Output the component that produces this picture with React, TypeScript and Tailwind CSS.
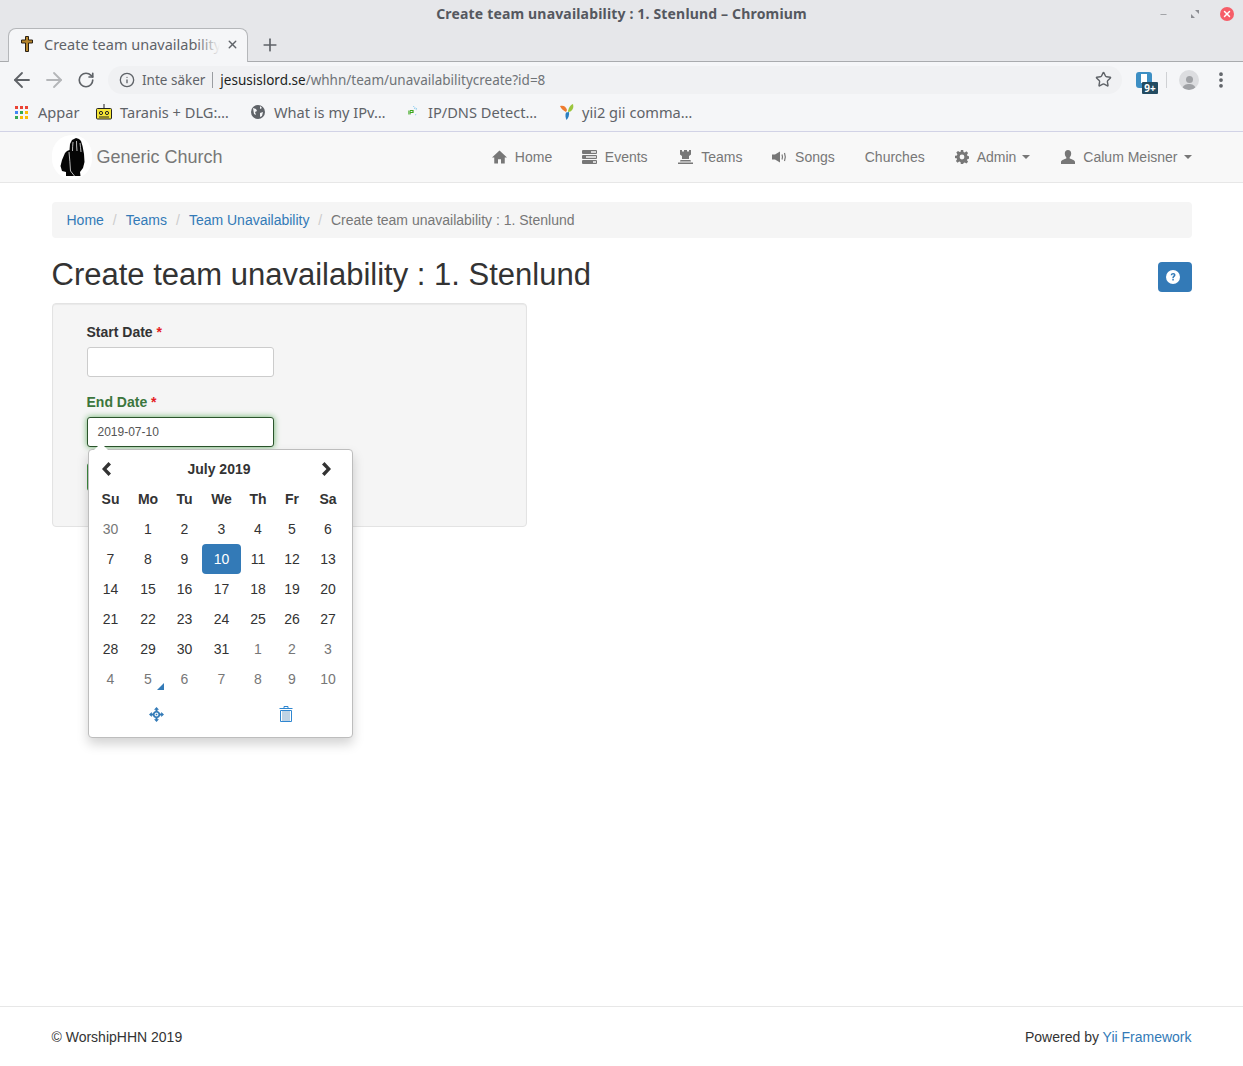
import { Star, MoreVertical, RotateCw, ArrowLeft, ArrowRight, Info, Plus, X, Minus } from "lucide-react";

const sans = "font-['Liberation_Sans',Arial,sans-serif]";
const ui = "font-['Noto_Sans',sans-serif]";

const Caret = () => (
  <span className="ml-[6px] inline-block h-0 w-0 border-x-[4px] border-t-[4px] border-x-transparent border-t-[#777]" />
);

const HomeIcon = () => (
  <svg width="16" height="14" viewBox="0 0 16 14" fill="#777">
    <path d="M8 0 L16 7.6 H13.6 V14 H9.6 V9.5 H6.4 V14 H2.4 V7.6 H0 Z" />
  </svg>
);
const TasksIcon = () => (
  <svg width="15" height="14" viewBox="0 0 15 14" fill="#777">
    <path fillRule="evenodd" d="M0 1a1 1 0 011-1h13a1 1 0 011 1v2a1 1 0 01-1 1H1a1 1 0 01-1-1zM9 1.200v1.600h5V1.200zM0 6a1 1 0 011-1h13a1 1 0 011 1v2a1 1 0 01-1 1H1a1 1 0 01-1-1zM4 6.200v1.600h10V6.200zM0 11a1 1 0 011-1h13a1 1 0 011 1v2a1 1 0 01-1 1H1a1 1 0 01-1-1zM11 11.200v1.600h3v-1.600z" />
  </svg>
);
const TowerIcon = () => (
  <svg width="15" height="14" viewBox="0 0 15 14" fill="#777">
    <path d="M2 0h2v1.500h2V0h3v1.500h2V0h2v4.500L11 6v3H4V6L2 4.500zM2.500 10h10L13 11.500H2zM0 12.500h15V14H0z" />
  </svg>
);
const VolumeIcon = () => (
  <svg width="15" height="12" viewBox="0 0 15 12" fill="none">
    <path d="M0 3.500h3L8 .5v11l-5-3H0z" fill="#777" />
    <path d="M10 3.500q1 2.500 0 5M12.500 2q1.600 4 0 8" stroke="#777" strokeWidth="1.200" />
  </svg>
);
const CogIcon = () => (
  <svg width="14" height="14" viewBox="0 0 14 14" fill="#777">
    <path fillRule="evenodd" d="M5.800 0h2.400l.3 1.900 1.300.5L11.400 1.300l1.700 1.700-1.100 1.600.5 1.300 1.900.3v2.400l-1.900.3-.5 1.300 1.100 1.600-1.700 1.700-1.600-1.100-1.300.5L8.200 14H5.800l-.3-1.900-1.300-.5-1.600 1.100L.9 11l1.100-1.600-.5-1.300L0 8.200V5.800l1.900-.3.5-1.300L1.300 2.600 3 .9l1.600 1.100 1.300-.5zM7 4.600a2.400 2.400 0 100 4.800 2.400 2.400 0 000-4.800z" />
  </svg>
);
const UserIcon = () => (
  <svg width="14" height="14" viewBox="0 0 14 14" fill="#777">
    <path d="M7 0c2 0 3.200 1.500 3.200 3.500 0 1.500-.6 3-1.500 3.800v1.200c1.800.7 5.300 1.500 5.300 3.500v2H0v-2c0-2 3.500-2.800 5.300-3.500V7.300C4.400 6.500 3.800 5 3.800 3.500 3.800 1.500 5 0 7 0z" />
  </svg>
);

const HandLogo = () => (
  <div className="flex h-[44px] w-[40px] items-center justify-center rounded-full bg-white">
    <svg width="26" height="39" viewBox="0 0 26 39" className="mt-[1px]">
      <path d="M17 0l3 1 2 2 1.500 5L25 16l.5 8L24 30l-3 4 .5 4H7v-4l-4-1-1.500-5L3 22l3-7 2-2 2.500-1L11 6l2-4z" fill="#050505" />
      <path d="M14 4q-.5 5-.5 9M17.500 3q0 5 .5 10M21 5q.5 4 1 9M10 14q1 10 1.500 19l4 5" stroke="#e8e8e8" strokeWidth=".8" fill="none" />
    </svg>
  </div>
);

const CrossFavicon = () => (
  <svg width="12" height="16" viewBox="0 0 12 16">
    <path d="M4.500.5h3v3.500h4v3h-4v8.500h-3V7h-4V4h4z" fill="#b8862b" stroke="#2a2115" strokeWidth="1" />
  </svg>
);
const AppsIcon = () => (
  <div className="grid grid-cols-3 gap-[2px]">
    {["#ea4335", "#ea4335", "#ea4335", "#4285f4", "#34a853", "#fbbc05", "#34a853", "#fbbc05", "#fbbc05"].map((c, i) => (
      <span key={i} className="h-[3px] w-[3px]" style={{ background: c }} />
    ))}
  </div>
);
const TaranisIcon = () => (
  <svg width="16" height="16" viewBox="0 0 16 16">
    <path d="M8 0v4" stroke="#222" strokeWidth="1" />
    <rect x=".5" y="4.500" width="15" height="10.500" rx="1" fill="#f5e637" stroke="#222" />
    <circle cx="5" cy="9" r="1.600" fill="none" stroke="#222" />
    <circle cx="11" cy="9" r="1.600" fill="none" stroke="#222" />
    <path d="M3 13h10" stroke="#222" />
  </svg>
);
const GlobeIcon = () => (
  <svg width="14" height="14" viewBox="0 0 14 14">
    <circle cx="7" cy="7" r="7" fill="#5f6368" />
    <path d="M2 3l3 1 1 2-2 1 1 3-2-1zM9 1l2 2-2 1zM9 8l3-1-1 4-2 1z" fill="#f5f6f8" />
  </svg>
);
const IpIcon = () => (
  <svg width="10" height="12" viewBox="0 0 10 12">
    <path d="M5 0l4 3M6 2l3 2M7 9l2-1" stroke="#7cc6ee" strokeWidth="1" strokeDasharray="1 1" />
    <path d="M0 4.500v4M2 4.500v4M2 4.500h3v2H2" stroke="#3aa71b" strokeWidth="1.200" fill="none" />
  </svg>
);
const YiiIcon = () => (
  <svg width="14" height="16" viewBox="0 0 14 16">
    <path d="M0 2c3-1 6 0 7 4l-1 2C4 7 1 5 0 2z" fill="#ee7b2f" />
    <path d="M13 0c1 3 0 6-2.500 7.500L8 8c0-3 2-7 5-8z" fill="#9bc53d" />
    <path d="M6 8.500l3-.5c.5 3-.5 6-2.500 8-1-2-1.500-5-.5-7.500z" fill="#2a7fc1" />
  </svg>
);

const Bookmark = ({ icon, label, width, slot }: { icon: React.ReactNode; label: string; width: string; slot: string }) => (
  <div className={`flex items-center ${width}`}>
    <span className={`flex shrink-0 items-center justify-start ${slot}`}>{icon}</span>
    <span className="whitespace-nowrap">{label}</span>
  </div>
);

const ChevronIcon = ({ left }: { left?: boolean }) => (
  <svg width="12" height="14" viewBox="0 0 12 14" fill="#333">
    {left ? <path d="M7.500 0L10 2.500 5.500 7 10 11.500 7.500 14 1 7z" /> : <path d="M4.500 0L2 2.500 6.500 7 2 11.500 4.500 14 11 7z" />}
  </svg>
);

const weeks = [
  [30, 1, 2, 3, 4, 5, 6],
  [7, 8, 9, 10, 11, 12, 13],
  [14, 15, 16, 17, 18, 19, 20],
  [21, 22, 23, 24, 25, 26, 27],
  [28, 29, 30, 31, 1, 2, 3],
  [4, 5, 6, 7, 8, 9, 10],
];

const Calendar = () => (
  <div className="absolute left-[1px] top-[57px] z-10 w-[265px] rounded-[4px] border border-[#bdbdbd] bg-white pb-[7px] pl-[3.500px] pr-[4.500px] pt-[4px] shadow-[0_6px_12px_rgba(0,0,0,0.175)]">
    <span className="absolute left-[5px] top-[-7px] h-0 w-0 border-x-[7px] border-b-[7px] border-x-transparent border-b-white" />
    <div className="grid grid-cols-[37px_38px_35px_39px_34px_34px_38px] text-center text-[14px] leading-[20px] text-[#333]">
      <div className="flex h-[30px] items-center justify-center pr-[8px]">
        <ChevronIcon left />
      </div>
      <div className="col-span-5 flex h-[30px] items-center justify-center font-bold">July 2019</div>
      <div className="flex h-[30px] items-center justify-center pr-[5px]">
        <ChevronIcon />
      </div>
      {["Su", "Mo", "Tu", "We", "Th", "Fr", "Sa"].map((d) => (
        <div key={d} className="flex h-[30px] items-center justify-center font-bold">
          {d}
        </div>
      ))}
      {weeks.map((week, w) =>
        week.map((d, i) => {
          const old = (w === 0 && d === 30) || (w === 4 && d < 10) || w === 5;
          const active = w === 1 && d === 10;
          return (
            <div
              key={`${w}-${i}`}
              className={`relative flex h-[30px] items-center justify-center ${
                active ? "rounded-[4px] bg-[#337ab7] text-white" : old ? "text-[#777]" : ""
              }`}
            >
              {d}
              {w === 5 && d === 5 && i === 1 && (
                <span className="absolute bottom-[4px] right-[3px] h-0 w-0 border-b-[7px] border-l-[7px] border-b-[#337ab7] border-l-transparent" />
              )}
            </div>
          );
        }),
      )}
    </div>
    <div className="mt-[4px] grid h-[32px] grid-cols-2 items-center">
      <div className="flex justify-center pl-[2px]">
        <svg width="15" height="15" viewBox="0 0 15 15" fill="#337ab7">
          <path d="M7.500 0l2.500 2.800H5zM7.500 15l2.500-2.800H5zM0 7.500l2.800-2.500v5zM15 7.500l-2.800-2.500v5z" />
          <path d="M7.500 2v11M2 7.500h11" stroke="#337ab7" strokeWidth="2" />
          <circle cx="7.500" cy="7.500" r="2.800" fill="#e6f0f8" stroke="#337ab7" strokeWidth="1.600" />
          <circle cx="7.500" cy="7.500" r=".8" />
        </svg>
      </div>
      <div className="flex justify-center pl-[5px]">
        <svg width="14" height="16" viewBox="0 0 14 16" fill="none" stroke="#2f86d0" strokeWidth="1">
          <path d="M.5 2.500h13M5 2.500V.5h4v2M1.500 4.500h11v11h-11z" />
          <path d="M4 5v10M6 5v10M8 5v10M10 5v10" stroke="#7fa6c9" />
        </svg>
      </div>
    </div>
  </div>
);

const NavItem = ({ icon, label, caret, slot = "mr-[7px]" }: { icon?: React.ReactNode; label: string; caret?: boolean; slot?: string }) => (
  <div className="flex items-center">
    {icon && <span className={`flex w-[15px] items-center justify-center ${slot}`}>{icon}</span>}
    <span>{label}</span>
    {caret && <Caret />}
  </div>
);

export default function App() {
  return (
    <div className={`flex min-h-[1066px] flex-col bg-white ${sans} text-[14px] leading-[20px] text-[#333]`}>
      {/* browser chrome */}
      <div className={`bg-[#e6e7ea] ${ui}`}>
        <div className="relative flex h-[28px] items-center justify-center text-[14px] font-bold tracking-[0.17px] text-[#55585f]">
          Create team unavailability : 1. Stenlund – Chromium
          <div className="absolute right-[9px] top-[7px] flex items-center">
            <Minus size={9} strokeWidth={2} className="mr-[23px] text-[#8b8d92]" />
            <svg width="8" height="8" viewBox="0 0 8 8" className="mr-[21px]" fill="#8b8d92">
              <path d="M4 0h4v4zM0 4l4 4H0z" />
            </svg>
            <span className="flex h-[14px] w-[14px] items-center justify-center rounded-full bg-[#f65d68] text-white">
              <X size={10} strokeWidth={3.5} />
            </span>
          </div>
        </div>
        <div className="flex h-[34px] items-start border-b border-[#a9abae] pl-[8px]">
          <div className="flex h-[34px] w-[240px] items-center rounded-t-[8px] border border-b-0 border-[#b5b7ba] bg-[#f5f6f8] pb-[3px] pl-[12px] pr-[6px]">
            <CrossFavicon />
            <span className="relative ml-[11px] w-[176px] overflow-hidden whitespace-nowrap text-[14.500px] text-[#5f6368]">
              Create team unavailability
              <span className="absolute right-0 top-0 h-full w-[24px] bg-gradient-to-r from-transparent to-[#f5f6f8]" />
            </span>
            <X size={13} strokeWidth={2.5} className="ml-[6px] text-[#5f6368]" />
          </div>
          <Plus size={20} strokeWidth={2} className="ml-[12px] mt-[7px] text-[#5f6368]" />
        </div>
      </div>
      <div className={`${ui} bg-[#f5f6f8]`}>
        <div className="flex h-[33px] items-center pl-[10px] pt-[2px]">
          <ArrowLeft size={24} strokeWidth={1.800} className="text-[#5f6368]" />
          <ArrowRight size={24} strokeWidth={1.800} className="ml-[8px] text-[#b4b6b9]" />
          <RotateCw size={18} strokeWidth={2.200} className="ml-[11px] text-[#5f6368]" />
          <div className="ml-[13px] flex h-[28px] w-[1014px] items-center rounded-full bg-[#f0f1f3] pl-[11px] pr-[10px] text-[13.500px]">
            <Info size={16} strokeWidth={2} className="text-[#5f6368]" />
            <span className="ml-[7px] text-[#5f6368]">Inte säker</span>
            <span className="mx-[7px] h-[16px] w-px bg-[#9a9da1]" />
            <span className="text-[#1c1e21]">jesusislord.se</span>
            <span className="text-[#6f7377]">/whhn/team/unavailabilitycreate?id=8</span>
            <Star size={17} strokeWidth={2} className="ml-auto text-[#5f6368]" />
          </div>
          <div className="relative ml-[14px] h-[16px] w-[16px] rounded-[3px] bg-[#3d8fc4]">
            <span className="absolute left-[5px] top-[2px] h-[9px] w-[6px] bg-white" />
            <span className="absolute left-[6px] top-[10px] h-[12px] w-[16px] rounded-[1px] bg-[#234b61] text-center text-[10px] font-bold leading-[12px] text-white">
              9+
            </span>
          </div>
          <span className="ml-[14px] h-[16px] w-px bg-[#cfd1d4]" />
          <div className="ml-[12px] flex h-[20px] w-[20px] flex-col items-center justify-end overflow-hidden rounded-full bg-[#dcdde0]">
            <span className="mb-[1px] h-[7px] w-[7px] rounded-full bg-[#a0a2a6]" />
            <span className="h-[6px] w-[14px] rounded-t-full bg-[#a0a2a6]" />
          </div>
          <MoreVertical size={20} strokeWidth={2.500} className="ml-[12px] text-[#5f6368]" />
        </div>
        <div className="flex h-[37px] items-center border-b border-[#d2d3e6] pb-[2px] pl-[15px] text-[14.600px] text-[#5f6368]">
          <Bookmark icon={<AppsIcon />} label="Appar" width="w-[81px]" slot="w-[23px]" />
          <Bookmark icon={<TaranisIcon />} label="Taranis + DLG:…" width="w-[155px]" slot="w-[24px]" />
          <Bookmark icon={<GlobeIcon />} label="What is my IPv…" width="w-[157px]" slot="w-[23px]" />
          <Bookmark icon={<IpIcon />} label="IP/DNS Detect…" width="w-[152px]" slot="w-[20px]" />
          <Bookmark icon={<YiiIcon />} label="yii2 gii comma…" width="w-[140px]" slot="w-[22px]" />
        </div>
      </div>

      {/* navbar */}
      <nav className="flex h-[51px] items-center justify-between border-b border-[#e7e7e7] bg-[#f8f8f8] px-[51.500px] text-[#777]">
        <div className="flex items-center">
          <HandLogo />
          <span className="ml-[5px] text-[18px]">Generic Church</span>
        </div>
        <div className="flex items-center gap-[30px]">
          <NavItem icon={<HomeIcon />} label="Home" slot="mr-[7.600px]" />
          <NavItem icon={<TasksIcon />} label="Events" slot="mr-[7.600px]" />
          <NavItem icon={<TowerIcon />} label="Teams" slot="mr-[8.600px]" />
          <NavItem icon={<VolumeIcon />} label="Songs" slot="mr-[7.600px]" />
          <NavItem label="Churches" />
          <NavItem icon={<CogIcon />} label="Admin" caret />
          <NavItem icon={<UserIcon />} label="Calum Meisner" caret slot="mr-[8px]" />
        </div>
      </nav>

      {/* page */}
      <main className="flex-1 px-[51.500px] pt-[19px]">
        <div className="flex h-[36px] items-center rounded-[4px] bg-[#f5f5f5] px-[15px]">
          <a className="text-[#337ab7]">Home</a>
          <span className="px-[9px] text-[#ccc]">/</span>
          <a className="text-[#337ab7]">Teams</a>
          <span className="px-[9px] text-[#ccc]">/</span>
          <a className="text-[#337ab7]">Team Unavailability</a>
          <span className="px-[8.800px] text-[#ccc]">/</span>
          <span className="text-[#777]">Create team unavailability : 1. Stenlund</span>
        </div>
        <div className="mt-[24px] flex h-[30px] items-start justify-between">
          <h1 className="text-[31px] leading-[26px] text-[#333]">Create team unavailability : 1. Stenlund</h1>
          <button className="flex h-[30px] w-[34px] items-center justify-center rounded-[4px] bg-[#337ab7] pb-[1px] pr-[4px]">
            <svg width="14" height="14" viewBox="0 0 14 14">
              <circle cx="7" cy="7" r="7" fill="#fff" />
              <path d="M4.700 5.300C4.800 3.800 5.800 3 7.200 3c1.400 0 2.300.8 2.300 2 0 1.700-1.700 1.700-1.700 3H6.300c0-2 1.500-2 1.500-3 0-.4-.3-.7-.7-.7-.5 0-.8.4-.9 1zM6.300 8.800h1.500v1.700H6.300z" fill="#337ab7" />
            </svg>
          </button>
        </div>
        <div className="mt-[11px] w-[475px] rounded-[4px] border border-[#e3e3e3] bg-[#f5f5f5] pb-[35px] pl-[34px] pt-[18px] shadow-[inset_0_1px_1px_rgba(0,0,0,0.05)]">
          <label className="mb-[5px] block font-bold">
            Start Date <span className="text-[#e51c23]">*</span>
          </label>
          <div className="h-[30px] w-[187px] rounded-[3px] border border-[#ccc] bg-white" />
          <div className="relative mt-[15px] w-[187px]">
            <label className="mb-[5px] block font-bold text-[#3c763d]">
              End Date <span className="text-[#e51c23]">*</span>
            </label>
            <div className="flex h-[30px] items-center rounded-[3px] border border-[#2b542c] bg-white px-[10px] text-[12px] text-[#555] shadow-[0_0_6px_#67b168]">
              2019-07-10
            </div>
            <div className="mt-[16px] h-[28px] w-[68px] rounded-[3px] bg-[#3d8b40]" />
            <Calendar />
          </div>
        </div>
      </main>

      {/* footer */}
      <footer className="flex h-[60px] items-center justify-between border-t border-[#e7e7e7] px-[51.500px]">
        <span>© WorshipHHN 2019</span>
        <span>
          Powered by <a className="text-[#337ab7]">Yii Framework</a>
        </span>
      </footer>
    </div>
  );
}
